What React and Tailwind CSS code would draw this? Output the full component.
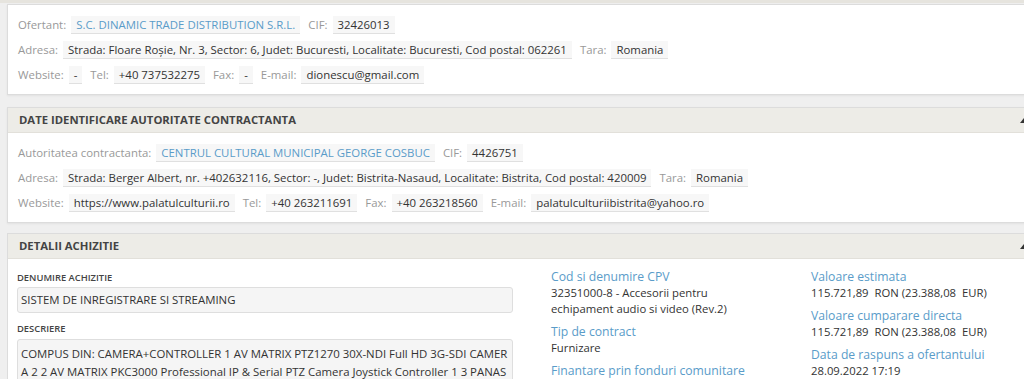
import React from "react";

function Label({ children }) {
  return <span className="text-[#999] mr-[5px]">{children}</span>;
}

function Val({ children, link }) {
  return (
    <span
      className={
        "bg-[#f7f7f7] border-b border-[#e0e0e0] px-[5px] leading-[17px] mr-[8px] whitespace-nowrap " +
        (link ? "text-[#5a9cc9]" : "text-[#333]")
      }
    >
      {children}
    </span>
  );
}

function Row({ children }) {
  return <div className="flex items-center h-[25px] whitespace-nowrap">{children}</div>;
}

function Header({ children }) {
  return (
    <div className="relative h-[25px] bg-[#edece7] border-b border-[#e2e0da] flex items-center pl-[11px] pt-[1px] text-[11.3px] font-bold text-[#444]">
      {children}
      <svg className="absolute left-[1012px] top-[9px]" width="8" height="8" viewBox="0 0 8 8">
        <path d="M0 6 L4 1 L8 6 Z" fill="#333" />
      </svg>
    </div>
  );
}

function Field({ title, children }) {
  return (
    <div className="mb-[7px]">
      <div className="text-[12.2px] leading-[16px] text-[#5a9cc9]">{title}</div>
      <div className="text-[11.3px] leading-[16px] text-[#333]">{children}</div>
    </div>
  );
}

export default function App() {
  return (
    <div className="w-[1024px] h-[379px] overflow-hidden bg-[#efefef] font-['Open_Sans',sans-serif]">
      <div className="h-[3px] bg-[#e6e4de]" />
      <div className="ml-[7px] mt-[1px] w-[1040px] bg-white border border-[#dcdcdc] shadow-[0_1px_2px_rgba(0,0,0,0.06)] text-[11.4px] px-[10px] py-[7px]">
        <Row>
          <Label>Ofertant:</Label>
          <Val link>S.C. DINAMIC TRADE DISTRIBUTION S.R.L.</Val>
          <Label>CIF:</Label>
          <Val>32426013</Val>
        </Row>
        <Row>
          <Label>Adresa:</Label>
          <Val>Strada: Floare Roșie, Nr. 3, Sector: 6, Judet: Bucuresti, Localitate: Bucuresti, Cod postal: 062261</Val>
          <Label>Tara:</Label>
          <Val>Romania</Val>
        </Row>
        <Row>
          <Label>Website:</Label>
          <Val>-</Val>
          <Label>Tel:</Label>
          <Val>+40 737532275</Val>
          <Label>Fax:</Label>
          <Val>-</Val>
          <Label>E-mail:</Label>
          <Val>dionescu@gmail.com</Val>
        </Row>
      </div>

      <div className="ml-[7px] mt-[12px] w-[1040px] bg-white border border-[#dcdcdc] shadow-[0_1px_2px_rgba(0,0,0,0.06)]">
        <Header>DATE IDENTIFICARE AUTORITATE CONTRACTANTA</Header>
        <div className="text-[11.4px] px-[10px] py-[7px]">
          <Row>
            <Label>Autoritatea contractanta:</Label>
            <Val link>CENTRUL CULTURAL MUNICIPAL GEORGE COSBUC</Val>
            <Label>CIF:</Label>
            <Val>4426751</Val>
          </Row>
          <Row>
            <Label>Adresa:</Label>
            <Val>Strada: Berger Albert, nr. +402632116, Sector: -, Judet: Bistrita-Nasaud, Localitate: Bistrita, Cod postal: 420009</Val>
            <Label>Tara:</Label>
            <Val>Romania</Val>
          </Row>
          <Row>
            <Label>Website:</Label>
            <Val>https://www.palatulculturii.ro</Val>
            <Label>Tel:</Label>
            <Val>+40 263211691</Val>
            <Label>Fax:</Label>
            <Val>+40 263218560</Val>
            <Label>E-mail:</Label>
            <Val>palatulculturiibistrita@yahoo.ro</Val>
          </Row>
        </div>
      </div>

      <div className="ml-[7px] mt-[10px] w-[1040px] bg-white border border-[#dcdcdc]">
        <Header>DETALII ACHIZITIE</Header>
        <div className="flex px-[9px] pt-[12px]">
          <div className="w-[496px] shrink-0">
            <div className="text-[9.4px] font-semibold text-[#444] leading-[14px]">DENUMIRE ACHIZITIE</div>
            <div className="mt-[2px] h-[26px] bg-[#f5f5f5] border border-[#dedede] rounded-[3px] px-[3px] flex items-center text-[11.4px] text-[#333]">
              SISTEM DE INREGISTRARE SI STREAMING
            </div>
            <div className="mt-[9px] text-[9.4px] font-semibold text-[#444] leading-[14px]">DESCRIERE</div>
            <div className="mt-[3px] h-[60px] bg-[#f5f5f5] border border-[#dedede] rounded-[3px] px-[3px] pt-[5px] text-[11.4px] leading-[18px] text-[#333] overflow-hidden whitespace-nowrap">
              <div>COMPUS DIN: CAMERA+CONTROLLER 1 AV MATRIX PTZ1270 30X-NDI Full HD 3G-SDI CAMER</div>
              <div>A 2 2 AV MATRIX PKC3000 Professional IP &amp; Serial PTZ Camera Joystick Controller 1 3 PANAS</div>
            </div>
          </div>
          <div className="ml-[38px] w-[260px] shrink-0 -mt-[2px]">
            <Field title="Cod si denumire CPV">
              32351000-8 - Accesorii pentru
              <br />
              echipament audio si video (Rev.2)
            </Field>
            <Field title="Tip de contract">Furnizare</Field>
            <div className="text-[12.2px] leading-[16px] text-[#5a9cc9]">Finantare prin fonduri comunitare</div>
          </div>
          <div className="w-[260px] shrink-0 -mt-[2px]">
            <Field title="Valoare estimata">115.721,89&nbsp; RON (23.388,08&nbsp; EUR)</Field>
            <Field title="Valoare cumparare directa">115.721,89&nbsp; RON (23.388,08&nbsp; EUR)</Field>
            <Field title="Data de raspuns a ofertantului">28.09.2022 17:19</Field>
          </div>
        </div>
      </div>
    </div>
  );
}
